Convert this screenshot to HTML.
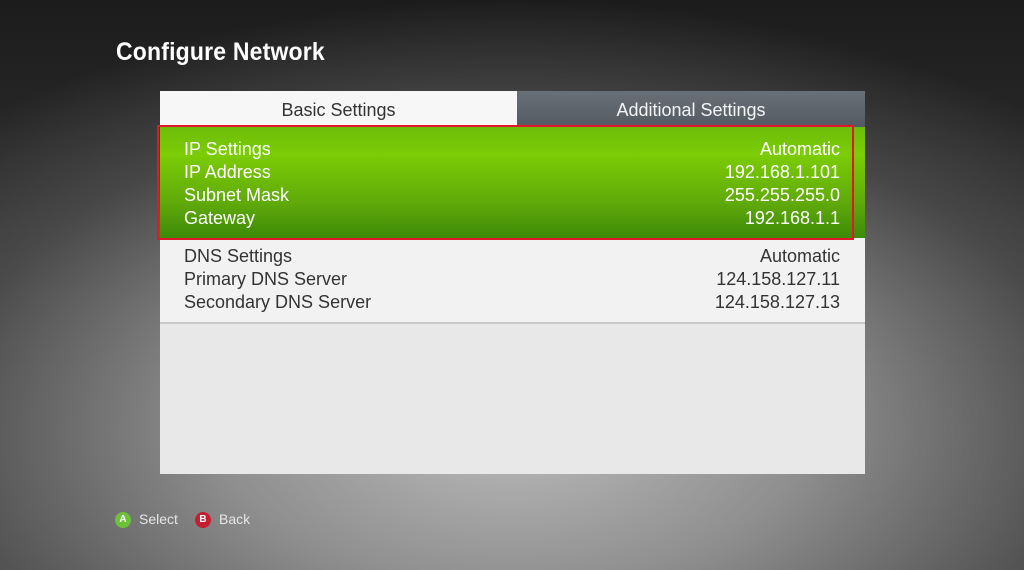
<!DOCTYPE html>
<html><head><style>
body{margin:0;width:1024px;height:570px;overflow:hidden;font-family:"Liberation Sans",sans-serif;
background:radial-gradient(ellipse 760px 420px at 512px 420px,rgba(190,190,190,1) 0%,rgba(150,150,150,0.9) 40%,rgba(90,90,90,0.6) 75%,rgba(40,40,40,0) 100%),linear-gradient(#1c1c1c,#2a2a2a 30%,#4a4a4a 100%);position:relative}
.t{position:absolute;left:116px;top:38px;color:#fff;font-size:25px;letter-spacing:0.2px;font-weight:bold;transform:scaleX(0.92);transform-origin:left}
.panel{position:absolute;left:160px;top:91px;width:705px;height:383px;background:#e8e8e8}
.tab1{position:absolute;left:0;top:0;width:357px;height:36px;background:#f7f7f7;color:#333;font-size:18px;text-align:center;line-height:38px}
.tab2{position:absolute;left:357px;top:0;width:348px;height:36px;background:linear-gradient(#6a7078,#535a62);color:#f4f4f4;font-size:18px;text-align:center;line-height:38px}
.green{position:absolute;left:0;top:36px;width:705px;height:111px;background:linear-gradient(#6cbd0a,#7ccc06 25%,#5fa80a 70%,#3c8a08)}
.red{position:absolute;left:-3px;top:34px;width:693px;height:111px;border:2.5px solid #e0182a;box-sizing:content-box}
.row{position:absolute;left:24px;width:656px;font-size:18px;display:flex;justify-content:space-between;height:23px;line-height:23px}
.g{color:#fff}.d{color:#333}
.sep{position:absolute;left:0;top:231px;width:705px;height:2px;background:#c8c8c8}
.wh{position:absolute;left:0;top:147px;width:705px;height:84px;background:#f2f2f2}
.ft{position:absolute;top:511px;font-size:14px;color:#e6e6e6}
.c{position:absolute;top:512px;width:16px;height:16px;border-radius:50%;color:#fff;font-size:10px;font-weight:bold;text-align:center;line-height:16px}
</style></head><body>
<div class="t">Configure Network</div>
<div class="panel">
<div class="tab1">Basic Settings</div>
<div class="tab2">Additional Settings</div>
<div class="green"></div>
<div class="wh"></div>
<div class="red"></div>
<div class="row g" style="top:47px"><span>IP Settings</span><span>Automatic</span></div>
<div class="row g" style="top:70px"><span>IP Address</span><span>192.168.1.101</span></div>
<div class="row g" style="top:93px"><span>Subnet Mask</span><span>255.255.255.0</span></div>
<div class="row g" style="top:116px"><span>Gateway</span><span>192.168.1.1</span></div>
<div class="row d" style="top:154px"><span>DNS Settings</span><span>Automatic</span></div>
<div class="row d" style="top:177px"><span>Primary DNS Server</span><span>124.158.127.11</span></div>
<div class="row d" style="top:200px"><span>Secondary DNS Server</span><span>124.158.127.13</span></div>
<div class="sep"></div>
</div>
<div class="c" style="left:115px;background:#6cc13a">A</div>
<div class="ft" style="left:139px">Select</div>
<div class="c" style="left:195px;background:#c41e32">B</div>
<div class="ft" style="left:219px">Back</div>
</body></html>
